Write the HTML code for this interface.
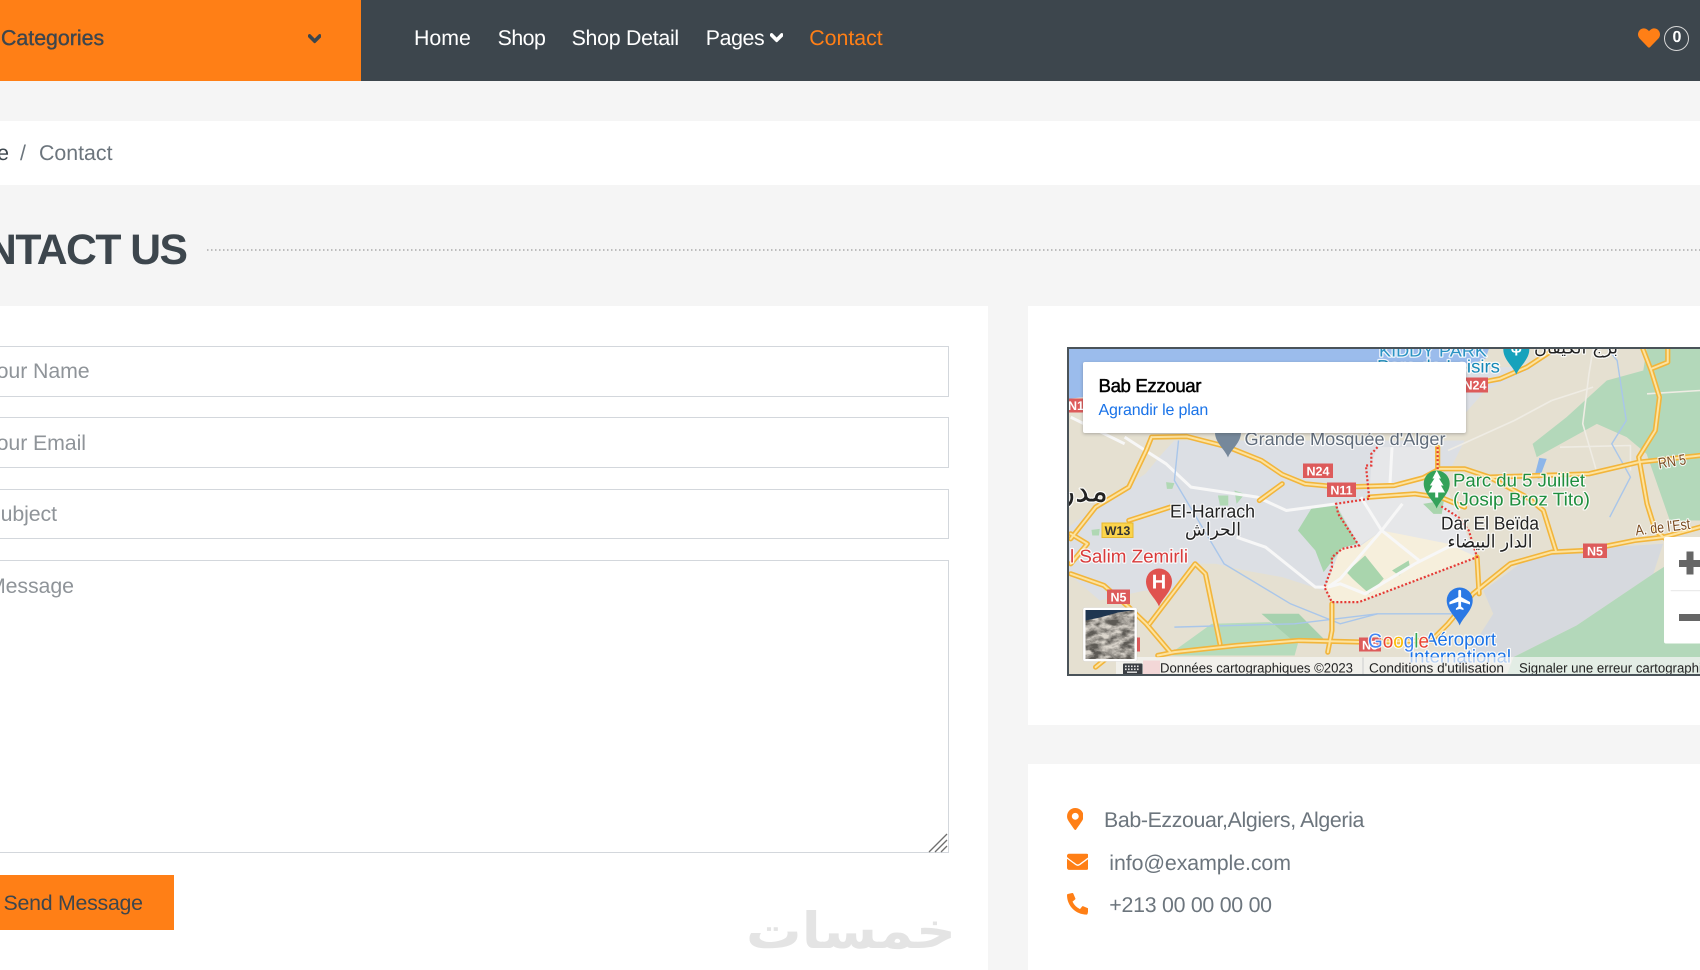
<!DOCTYPE html>
<html lang="en">
<head>
<meta charset="utf-8">
<title>Contact</title>
<style>
*{box-sizing:border-box}
html,body{margin:0;padding:0;width:1700px;height:970px;overflow:hidden;background:#f5f5f5;font-family:"Liberation Sans","DejaVu Sans",sans-serif;font-size:21.33px;color:#6c757d;text-rendering:geometricPrecision}
.page{position:relative;width:1700px;height:970px;overflow:hidden}
.abs{position:absolute;white-space:nowrap}
header{position:absolute;left:0;top:0;width:1700px;height:81px;background:#3d464d}
.cat{position:absolute;left:0;top:0;width:361.2px;height:81px;background:#ff7f16}
.t{position:absolute;white-space:nowrap;line-height:30px;height:30px}
nav a{position:absolute;top:23px;line-height:30px;color:#fff;text-decoration:none;white-space:nowrap}
.crumb{position:absolute;left:0;top:121px;width:1700px;height:64px;background:#fff}
h2{position:absolute;margin:0;right:1513.5px;top:224px;line-height:52px;font-size:42.66px;font-weight:700;color:#3d464d;letter-spacing:-1.5px;white-space:nowrap}
.dots{position:absolute;left:207px;top:249.3px;width:1493px;height:1.4px;background:repeating-linear-gradient(90deg,#bdbdbd 0 1.4px,transparent 1.4px 4px)}
.card{position:absolute;background:#fff}
input,textarea{position:absolute;left:-32px;width:980.7px;border:1.33px solid #d3d7dc;background:#fff;margin:0;padding:0 0 0 15.5px;font:21.33px "Liberation Sans",sans-serif;color:#495057;outline:0;border-radius:0;letter-spacing:-.1px}
input{height:50.67px}
textarea{height:293px;padding-top:9px;line-height:32px;resize:none}
::placeholder{color:#8f9499;opacity:1}
button{position:absolute;left:-30px;top:875px;width:204px;height:55px;background:#ff7f16;border:0;margin:0;padding:2px 0 0 33.5px;text-align:left;font:21.33px "Liberation Sans",sans-serif;color:#3d464d;letter-spacing:-.25px}
.map{position:absolute;left:1067px;top:346.5px;width:640px;height:329.5px;border:2px solid #4a5359;overflow:hidden;background:#e5e0d1}
.map svg{position:absolute;left:-2px;top:-2px}
.lb{font-family:"Liberation Sans","DejaVu Sans",sans-serif;paint-order:stroke;stroke:#fff;stroke-width:2.4px;stroke-linejoin:round;stroke-opacity:.85}
.sh{font:700 12.5px "Liberation Sans",sans-serif;fill:#fff;text-anchor:middle}
#rd path,.nsc{vector-effect:non-scaling-stroke}
.info{position:absolute;left:1082.5px;top:362px;width:383.5px;height:71px;background:#fff;box-shadow:0 1px 3px rgba(60,64,67,.35);border-radius:2px}
</style>
</head>
<body>
<div class="page">

<header>
  <div class="cat">
    <span class="t" style="left:1px;top:23px;color:#3d464d;-webkit-text-stroke:.4px #3d464d">Categories</span>
    <svg class="abs" style="left:308px;top:30.5px" width="13.33" height="15.2" viewBox="0 0 448 512"><path fill="#3d464d" stroke="#3d464d" stroke-width="42" stroke-linejoin="round" d="M207.029 381.476L12.686 187.132c-9.373-9.373-9.373-24.569 0-33.941l22.667-22.667c9.357-9.357 24.522-9.375 33.901-.04L224 284.505l154.745-154.021c9.379-9.335 24.544-9.317 33.901.04l22.667 22.667c9.373 9.373 9.373 24.569 0 33.941L240.971 381.476c-9.373 9.372-24.569 9.372-33.942 0z"/></svg>
  </div>
  <nav>
    <a href="#" style="left:414px">Home</a>
    <a href="#" style="left:497.6px;letter-spacing:-.5px">Shop</a>
    <a href="#" style="left:571.6px;letter-spacing:-.27px">Shop Detail</a>
    <a href="#" style="left:705.8px;letter-spacing:-.4px">Pages</a>
    <a href="#" style="left:809.2px;color:#ff7f16">Contact</a>
  </nav>
  <svg class="abs" style="left:770px;top:30.2px" width="13.33" height="15.2" viewBox="0 0 448 512"><path fill="#fff" stroke="#fff" stroke-width="42" stroke-linejoin="round" d="M207.029 381.476L12.686 187.132c-9.373-9.373-9.373-24.569 0-33.941l22.667-22.667c9.357-9.357 24.522-9.375 33.901-.04L224 284.505l154.745-154.021c9.379-9.335 24.544-9.317 33.901.04l22.667 22.667c9.373 9.373 9.373 24.569 0 33.941L240.971 381.476c-9.373 9.372-24.569 9.372-33.942 0z"/></svg>
  <svg class="abs" style="left:1638px;top:26.5px" width="22" height="22" viewBox="0 0 512 512"><path fill="#ff7f16" d="M462.3 62.6C407.5 15.9 326 24.3 275.7 76.2L256 96.5l-19.7-20.3C186.1 24.3 104.5 15.9 49.7 62.6c-62.8 53.6-66.1 149.8-9.9 207.9l193.5 199.8c12.5 12.9 32.8 12.9 45.3 0l193.5-199.8c56.3-58.1 53-154.3-9.8-207.9z"/></svg>
  <span class="abs" style="left:1664.4px;top:26.3px;width:25px;height:25px;border:1.4px solid #d8d8d8;border-radius:50%;text-align:center;line-height:22px;font-size:16px;font-weight:700;color:#fff">0</span>
</header>

<div class="crumb">
  <span class="t" style="left:-50px;top:17px;color:#3d464d;width:59px;text-align:right">Home</span>
  <span class="t" style="left:20px;top:17px">/</span>
  <span class="t" style="left:39px;top:17px">Contact</span>
</div>

<h2>CONTACT US</h2>
<div class="dots"></div>

<div class="card" style="left:0;top:306px;width:988px;height:664px">
  <svg class="abs" style="left:740px;top:595px" width="220" height="65" viewBox="740 901 220 65"><text x="746" y="948" font-family="'DejaVu Sans',sans-serif" font-weight="700" font-size="50" fill="#e4e4e4" textLength="210" lengthAdjust="spacingAndGlyphs">خمسات</text></svg>
</div>

<form>
  <input type="text" placeholder="Your Name" style="top:346px">
  <input type="text" placeholder="Your Email" style="top:417.3px;padding-top:2px">
  <input type="text" placeholder="Subject" style="top:488.6px;padding-left:17.5px;padding-top:2px">
  <textarea placeholder="Message" style="top:560px;padding-left:19px"></textarea>
  <button type="button">Send Message</button>
</form>
<svg class="abs" style="left:928px;top:833px" width="20" height="20" viewBox="0 0 20 20"><g stroke="#6f6f6f" stroke-width="1.3" fill="none"><path d="M1 19L19 1"/><path d="M7 19L19 7"/><path d="M13 19L19 13"/></g></svg>

<div class="card" style="left:1028px;top:306px;width:672px;height:419px"></div>
<div class="card" style="left:1028px;top:764px;width:672px;height:206px"></div>

<div class="map">
<svg width="640" height="330" viewBox="1067 346.5 640 330">
  <defs>
    <g id="rd" fill="none" stroke-linejoin="round" stroke-linecap="round">
      <path d="M245 320L330 318L430 350L510 390L560 432L615 460L700 470L830 465L900 442L940 415L1000 415L1060 440L1105 470L1150 500L1190 540L1210 620L1220 660"/>
      <path d="M770 500L880 490L945 502L1000 530"/>
      <path d="M1060 440L1300 430L1420 395L1568 375"/>
      <path d="M50 625L110 530L190 470L232 360L245 320"/>
      <path d="M50 730L130 765L190 830L232 880L290 965"/>
      <path d="M240 880L350 700L375 730L400 880L410 940"/>
      <path d="M260 975L300 965L450 945L600 930L760 935L920 930"/>
      <path d="M920 930L960 880L1020 790L1110 700L1210 665L1290 660L1410 630L1480 620L1568 590"/>
      <path d="M1030 680L1035 790"/>
      <path d="M1430 55L1450 120L1470 200L1460 300L1420 380L1440 520L1460 600L1490 630"/>
      <path d="M1000 165L1085 145L1150 110L1205 65"/>
      <path d="M1490 55L1490 95L1450 115"/>
      <path d="M505 510L560 460"/>
      <path d="M680 820L680 900L670 965"/>
      <path d="M190 570L290 530"/>
      <path d="M935 350L935 420"/>
      <path d="M50 610L90 640L50 700"/>
      <path d="M110 1010L170 950"/>
    </g>
    <path id="pin" d="M0 25C-3 17-13 10-13 0A13 13 0 1 1 13 0C13 10 3 17 0 25Z"/>
    <filter id="nz" x="0" y="0" width="100%" height="100%"><feTurbulence type="fractalNoise" baseFrequency=".09 .16" numOctaves="4" seed="7"/><feColorMatrix values="0 0 0 0 .72  0 0 0 0 .68  0 0 0 0 .62  1.6 1.6 1.6 0 -1.9"/></filter>
  </defs>

  <rect x="1067" y="346" width="640" height="332" fill="#e5e0d1"/>

  <!-- landscape -->
  <g transform="translate(1050,330) scale(.4146,.3333)">
    <path fill="#9bbcec" d="M45 50H1060L1050 85L960 130L600 120L80 200L45 205Z"/>
    <path fill="#dcdfe4" d="M300 330L1000 330L960 430L900 530L860 640L700 720L660 780L560 740L470 720L400 700L350 700L300 800L230 780L120 810L45 730L45 590L130 510L230 430L270 370Z"/>
    <path fill="#dcdfe4" d="M1000 110L1170 110L1050 180L1000 250Z"/>
    <path fill="#e6e7e9" d="M690 520L770 505L775 400L790 350L930 350L940 425L1030 680L950 640L800 600L740 650L700 655L745 640Z"/>
    <path fill="#f6efdc" d="M665 770L700 655L745 650L800 600L960 640L1030 680L745 815L680 815Z"/>
    <path fill="#d6d9de" d="M1045 780L1134 700L1214 670L1343 650L1479 640L1455 730L1270 885L1118 980L1000 985L1069 850Z"/>
    <path fill="#b3d8ba" d="M1270 885L1455 730L1568 640L1568 1040L1100 1040L1118 980Z"/>
    <path fill="#b3d8ba" d="M1164 340L1246 260L1343 150L1431 120L1439 55L1568 55L1568 570L1495 570L1439 370L1391 320L1319 280L1174 380Z"/>
    <path fill="#a9d5ad" d="M598 600L630 535L690 525L742 640L705 652L660 725L640 660Z"/>
    <path fill="#a9d5ad" d="M715 725L760 675L805 745L770 790L730 745Z"/>
    <path fill="#a9d5ad" d="M825 720L865 690L868 708L842 735Z"/>
    <path fill="#a9d5ad" d="M900 520L950 510L945 550L925 550Z"/>
    <path fill="#b6dbbc" d="M295 965L390 880L530 875L600 930L590 975L295 975Z"/>
    <path fill="#a6d1ae" d="M510 850L600 850L660 925L590 935Z"/>
    <path fill="#b0d8b4" d="M280 455L300 458L295 475L282 475Z M405 495L430 495L430 525L410 525Z M445 480L470 490L450 520Z M100 598L120 595L118 615L102 615Z"/>
    <path fill="#8db6e9" d="M1180 382L1198 385L1180 445L1168 440Z"/>
    <!-- white roads -->
    <g fill="none" stroke="#f7f7f7" stroke-width="3" stroke-linejoin="round">
      <path class="nsc" d="M180 320L280 400L340 470L500 500L570 540L690 520"/>
      <path class="nsc" d="M450 620L520 650L640 770L665 770"/>
      <path class="nsc" d="M670 770L700 745L800 600L850 520"/>
      <path class="nsc" d="M670 770L700 760L760 790L880 700L960 650L1030 640"/>
      <path class="nsc" d="M750 500L800 600L890 690"/>
      <path class="nsc" d="M825 350L820 460"/>
      <path class="nsc" d="M50 260L180 340"/>
    </g>
    <g fill="none" stroke="#efece4" stroke-width="1.6" stroke-linejoin="round">
      <path class="nsc" d="M1310 55L1300 130L1285 280L1320 430"/>
      <path class="nsc" d="M960 360L1120 270L1210 210"/>
      <path class="nsc" d="M1210 210L1310 170"/>
      <path class="nsc" d="M1568 180L1440 190"/>
      <path class="nsc" d="M1230 350L1400 345L1400 420"/>
    </g>
    <!-- rivers -->
    <g fill="none" stroke="#a9c6ea" stroke-width="1.4">
      <path class="nsc" d="M1345 55L1368 90L1390 270L1355 340L1400 440L1350 560"/>
      <path class="nsc" d="M310 330L300 450L420 700L580 820L700 880L790 850"/>
      <path class="nsc" d="M300 890L590 880L790 850L980 850"/>
    </g>
    <use href="#rd" stroke="#f2b53b" stroke-width="5.2"/>
    <use href="#rd" stroke="#fde3a0" stroke-width="2"/>
    <!-- red boundary -->
    <g fill="none" stroke="#e53935" stroke-width="2.2" stroke-dasharray="2 2">
      <path class="nsc" d="M935 350L935 420"/>
      <path class="nsc" d="M790 350L775 370L775 405L762 405L770 505L690 520L695 550L745 645L705 655L680 680L680 710L662 770L680 815L745 815L1030 680L1010 600L985 560L940 525"/>
    </g>
  </g>

  <!-- top labels -->
  <text class="lb" x="1379" y="356" font-size="17" fill="#2a93c4" textLength="108" lengthAdjust="spacingAndGlyphs">KIDDY PARK</text>
  <text class="lb" x="1377" y="372" font-size="18" fill="#1689b8" textLength="123" lengthAdjust="spacingAndGlyphs">Parc de Loisirs</text>
  <text class="lb" x="1534" y="353" font-size="17" fill="#222" textLength="84" lengthAdjust="spacingAndGlyphs" direction="rtl" style="font-family:'DejaVu Sans',sans-serif" text-anchor="end">برج الكيفان</text>
  <use href="#pin" transform="translate(1516.3,349)" fill="#16a2bc"/>
  <text x="1516.3" y="355" text-anchor="middle" font-size="14" font-weight="700" fill="#fff">Ψ</text>

  <!-- shields -->
  <rect x="1461" y="377" width="27" height="15" fill="#dd5b5b"/><text class="sh" x="1475" y="389">N24</text>
  <rect x="1069" y="398" width="14" height="14" fill="#dd5b5b"/><text class="sh" x="1076" y="409.5">N1</text>
  <rect x="1303" y="463" width="30" height="14.5" fill="#dd5b5b"/><text class="sh" x="1318" y="475">N24</text>
  <rect x="1327" y="482" width="29" height="14.5" fill="#dd5b5b"/><text class="sh" x="1341.5" y="494">N11</text>
  <rect x="1102" y="522.5" width="31" height="14.5" fill="#fbd44c" stroke="#e7b92f"/><text class="sh" x="1117.5" y="534.5" style="fill:#333">W13</text>
  <rect x="1107" y="589" width="23" height="14.5" fill="#dd5b5b"/><text class="sh" x="1118.5" y="601">N5</text>
  <rect x="1583" y="543" width="24" height="14.5" fill="#dd5b5b"/><text class="sh" x="1595" y="555">N5</text>
  <rect x="1359" y="637" width="22" height="14" fill="#dd5b5b"/><text class="sh" x="1370" y="649">N5</text>
  <rect x="1137" y="637" width="3" height="14" fill="#dd5b5b"/>
  <rect x="1143" y="660" width="17" height="14" fill="#e88"/>

  <!-- pins -->
  <use href="#pin" transform="translate(1228,432)" fill="#76889b"/>
  <use href="#pin" transform="translate(1436.7,483)" fill="#34a25a"/>
  <path fill="#fff" d="M1436.7 470L1441 478H1439L1443.5 485H1441L1445 492H1438.2V497H1435.2V492H1428.4L1432.4 485H1429.9L1434.4 478H1432.4Z"/>
  <use href="#pin" transform="translate(1159,581)" fill="#e0524f"/>
  <text x="1159" y="588" text-anchor="middle" font-size="20" font-weight="700" fill="#fff">H</text>
  <use href="#pin" transform="translate(1459.7,600)" fill="#2a78e4"/>
  <path fill="#fff" d="M1458.3 590.5C1458.3 589 1461.1 589 1461.1 590.5V596.5L1470 601.5V604L1461.1 601.3V606L1463.5 608V609.5L1459.7 608.5L1455.9 609.5V608L1458.3 606V601.3L1449.4 604V601.5L1458.3 596.5Z"/>

  <!-- labels -->
  <text class="lb" x="1244.5" y="444.5" font-size="18" fill="#5f6b7a" textLength="201" lengthAdjust="spacingAndGlyphs">Grande Mosquée d'Alger</text>
  <text class="lb" x="1108" y="501" font-size="31" fill="#222" text-anchor="end" style="font-family:'DejaVu Sans',sans-serif">مدر</text>
  <text class="lb" x="1170" y="517" font-size="18.5" fill="#222" textLength="85" lengthAdjust="spacingAndGlyphs">El-Harrach</text>
  <text class="lb" x="1213" y="535" font-size="18" fill="#222" text-anchor="middle" style="font-family:'DejaVu Sans',sans-serif" textLength="56" lengthAdjust="spacingAndGlyphs">الحراش</text>
  <text class="lb" x="1070" y="562" font-size="18.5" fill="#d93a3a" textLength="118" lengthAdjust="spacingAndGlyphs">l Salim Zemirli</text>
  <text class="lb" x="1453" y="486" font-size="18.5" fill="#1e8e3e" textLength="132" lengthAdjust="spacingAndGlyphs">Parc du 5 Juillet</text>
  <text class="lb" x="1453" y="505" font-size="18.5" fill="#1e8e3e" textLength="137" lengthAdjust="spacingAndGlyphs">(Josip Broz Tito)</text>
  <text class="lb" x="1441" y="529" font-size="18.5" fill="#222" textLength="98" lengthAdjust="spacingAndGlyphs">Dar El Beïda</text>
  <text class="lb" x="1490" y="547" font-size="18" fill="#222" text-anchor="middle" style="font-family:'DejaVu Sans',sans-serif" textLength="85" lengthAdjust="spacingAndGlyphs">الدار البيضاء</text>
  <text class="lb" x="0" y="0" font-size="15" fill="#7a4a1f" transform="translate(1659,468) rotate(-9)" textLength="28" lengthAdjust="spacingAndGlyphs">RN 5</text>
  <text class="lb" x="0" y="0" font-size="15" fill="#7a4a1f" transform="translate(1636,535) rotate(-7)" textLength="55" lengthAdjust="spacingAndGlyphs">A. de l'Est</text>
  <text class="lb" x="1409" y="662" font-size="18.5" fill="#1a73e8" textLength="102" lengthAdjust="spacingAndGlyphs">International</text>

  <!-- footer strip -->
  <rect x="1116" y="656.5" width="600" height="20" fill="#f5f5f5" fill-opacity=".72"/>
  <text class="lb" x="1425" y="645" font-size="18.5" fill="#1a73e8" textLength="71" lengthAdjust="spacingAndGlyphs">Aéroport</text>
  <text class="lb" x="1368" y="647" font-size="20" textLength="61" lengthAdjust="spacingAndGlyphs"><tspan fill="#4285f4">G</tspan><tspan fill="#ea4335">o</tspan><tspan fill="#fbbc05">o</tspan><tspan fill="#4285f4">g</tspan><tspan fill="#34a853">l</tspan><tspan fill="#ea4335">e</tspan></text>

  <!-- keyboard icon -->
  <rect x="1123" y="663" width="19.5" height="11" rx="1" fill="#3b3f44"/>
  <g fill="#e6e6e6"><rect x="1125" y="665" width="1.6" height="1.6"/><rect x="1128" y="665" width="1.6" height="1.6"/><rect x="1131" y="665" width="1.6" height="1.6"/><rect x="1134" y="665" width="1.6" height="1.6"/><rect x="1137" y="665" width="1.6" height="1.6"/><rect x="1125" y="668" width="1.6" height="1.6"/><rect x="1128" y="668" width="1.6" height="1.6"/><rect x="1131" y="668" width="1.6" height="1.6"/><rect x="1134" y="668" width="1.6" height="1.6"/><rect x="1137" y="668" width="1.6" height="1.6"/><rect x="1127" y="671" width="10" height="1.4"/></g>
  <text x="1160" y="672" font-size="13.4" fill="#222" textLength="193" lengthAdjust="spacingAndGlyphs">Données cartographiques ©2023</text>
  <rect x="1362.5" y="657" width="1" height="18" fill="#ccc"/>
  <text x="1369" y="672" font-size="13.4" fill="#222" textLength="135" lengthAdjust="spacingAndGlyphs">Conditions d'utilisation</text>
  <text x="1519" y="672" font-size="13.4" fill="#222" textLength="205" lengthAdjust="spacingAndGlyphs">Signaler une erreur cartographique</text>

  <!-- thumbnail -->
  <g>
    <rect x="1083" y="607" width="54" height="54" rx="2" fill="#fff" stroke="rgba(0,0,0,.12)" stroke-width=".5"/>
    <rect x="1085.5" y="609.5" width="49" height="49" fill="#5d5a55"/>
    <rect x="1085.5" y="609.5" width="49" height="49" filter="url(#nz)"/>
    <path fill="#1f3650" d="M1085.5 609.5H1134.5L1118 612L1100 617L1085.5 620Z"/>
  </g>

  <!-- zoom control -->
  <rect x="1664" y="536.5" width="50" height="106.5" rx="2" fill="#fff"/>
  <rect x="1679" y="559.5" width="30" height="7" fill="#666"/>
  <rect x="1686.5" y="551" width="7" height="23" fill="#666"/>
  <rect x="1670.7" y="589.7" width="40" height="1" fill="#e6e6e6"/>
  <rect x="1679" y="613.5" width="30" height="7" fill="#666"/>
</svg>
</div>

<div class="info">
  <span class="t" style="left:16px;top:9px;font-size:18.67px;color:#000;-webkit-text-stroke:.45px #000;letter-spacing:-.38px">Bab Ezzouar</span>
  <span class="t" style="left:16px;top:34px;font-size:16px;color:#1a73e8;letter-spacing:-.15px">Agrandir le plan</span>
</div>

<!-- contact info -->
<svg class="abs" style="left:1066.7px;top:808px" width="16.6" height="22" viewBox="0 0 384 512"><path fill="#ff7f16" d="M172.268 501.67C26.97 291.031 0 268.413 0 192 0 85.961 85.961 0 192 0s192 85.961 192 192c0 76.413-26.97 99.031-172.268 309.67-9.535 13.774-29.93 13.773-39.464 0zM192 272c44.183 0 80-35.817 80-80s-35.817-80-80-80-80 35.817-80 80 35.817 80 80 80z"/></svg>
<span class="t" style="left:1104px;top:805px;letter-spacing:-.37px">Bab-Ezzouar,Algiers, Algeria</span>
<svg class="abs" style="left:1066.7px;top:850.5px" width="21.6" height="21.6" viewBox="0 0 512 512"><path fill="#ff7f16" d="M502.3 190.8c3.9-3.1 9.7-.2 9.7 4.7V400c0 26.5-21.5 48-48 48H48c-26.5 0-48-21.5-48-48V195.6c0-5 5.7-7.8 9.7-4.7 22.4 17.4 52.1 39.5 154.1 113.6 21.1 15.4 56.7 47.8 92.2 47.6 35.7.3 72-32.8 92.3-47.6 102-74.1 131.6-96.3 154-113.7zM256 320c23.2.4 56.6-29.2 73.4-41.4 132.7-96.3 142.8-104.7 173.4-128.7 5.8-4.5 9.2-11.5 9.2-18.9v-19c0-26.5-21.5-48-48-48H48C21.5 64 0 85.5 0 112v19c0 7.4 3.4 14.3 9.2 18.9 30.6 23.9 40.7 32.4 173.4 128.7 16.8 12.2 50.2 41.8 73.4 41.4z"/></svg>
<span class="t" style="left:1109.3px;top:848px;letter-spacing:-.08px">info@example.com</span>
<svg class="abs" style="left:1066.7px;top:893px" width="21.6" height="21.6" viewBox="0 0 512 512"><path fill="#ff7f16" d="M497.39 361.8l-112-48a24 24 0 0 0-28 6.9l-49.6 60.6A370.66 370.66 0 0 1 130.6 204.11l60.6-49.6a23.94 23.94 0 0 0 6.9-28l-48-112A24.16 24.16 0 0 0 122.6.61l-104 24A24 24 0 0 0 0 48c0 256.5 207.9 464 464 464a24 24 0 0 0 23.4-18.6l24-104a24.29 24.29 0 0 0-14.01-27.6z"/></svg>
<span class="t" style="left:1109.3px;top:890px;letter-spacing:-.26px">+213 00 00 00 00</span>

</div>
</body>
</html>
